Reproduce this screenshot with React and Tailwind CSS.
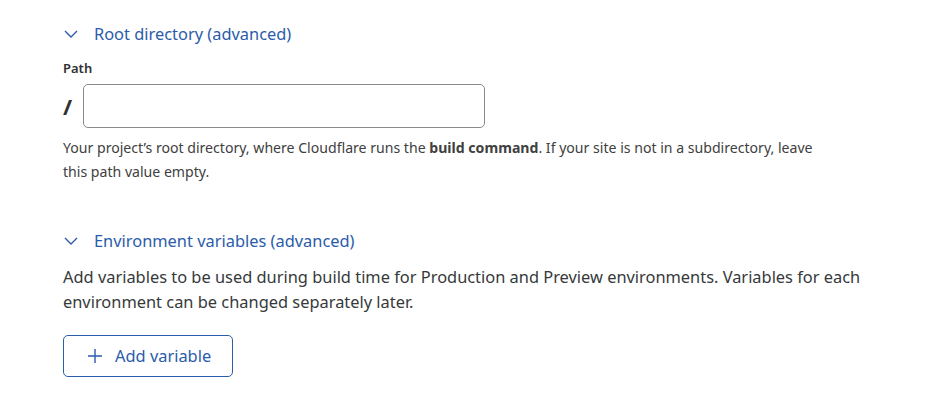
import React from 'react';

const Chevron = () => (
  <svg width="14" height="8" viewBox="0 0 14 8" fill="none" className="shrink-0">
    <path d="M1 1l6 6 6-6" stroke="#2a5caa" strokeWidth="1.4" />
  </svg>
);

const SectionToggle = ({ children }) => (
  <button className="flex items-center gap-[16px] pl-[1px] text-[16.4px] leading-[20px] text-[#2a5caa]">
    <Chevron />
    <span>{children}</span>
  </button>
);

export default function App() {
  return (
    <div
      className="min-h-[412px] w-[941px] bg-white pl-[63px] pt-[24px] text-[#36393a]"
      style={{ fontFamily: '"Noto Sans", "Open Sans", sans-serif' }}
    >
      <SectionToggle>Root directory (advanced)</SectionToggle>

      <div className="mt-[16px] text-[13px] font-semibold leading-[16px] text-[#313131]">Path</div>
      <div className="mt-[8px] flex items-center gap-[11px]">
        <span className="text-[22px] font-bold leading-none text-[#313131]">/</span>
        <input className="h-[44px] w-[402px] rounded-[5px] border border-[#8a8a8a] px-3 outline-none" />
      </div>
      <p className="mt-[8px] w-[770px] text-[14.1px] leading-[24px] text-[#404040]">
        Your project’s root directory, where Cloudflare runs the <b>build command</b>. If your site is not in a
        subdirectory, leave this path value empty.
      </p>

      <div className="mt-[47px]">
        <SectionToggle>Environment variables (advanced)</SectionToggle>
      </div>
      <p className="mt-[13px] w-[820px] text-[16.4px] leading-[25px] text-[#36393a]">
        Add variables to be used during build time for Production and Preview environments. Variables for each
        environment can be changed separately later.
      </p>

      <button className="mt-[21px] flex h-[42px] w-[170px] items-center gap-[12px] rounded-[5px] border border-[#2a5caa] pl-[23px] text-[16.4px] text-[#2a5caa]">
        <svg width="16" height="16" viewBox="0 0 16 16" fill="none">
          <path d="M8 1v14M1 8h14" stroke="#2a5caa" strokeWidth="1.4" />
        </svg>
        <span>Add variable</span>
      </button>
    </div>
  );
}
